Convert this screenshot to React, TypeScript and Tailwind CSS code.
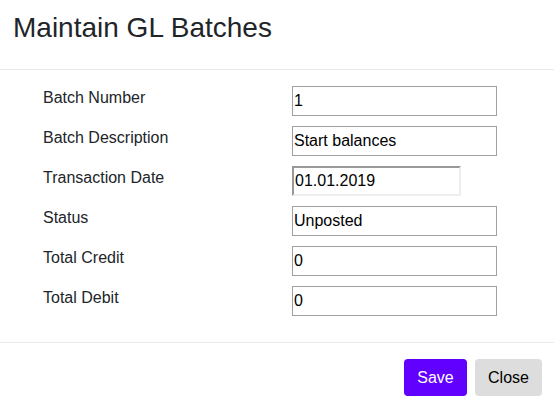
import React from "react";

const fields = [
  { label: "Batch Number", value: "1" },
  { label: "Batch Description", value: "Start balances" },
  { label: "Transaction Date", value: "01.01.2019", date: true },
  { label: "Status", value: "Unposted" },
  { label: "Total Credit", value: "0" },
  { label: "Total Debit", value: "0" },
];

const App = () => {
  return (
    <div className="w-[554px] h-[411px] bg-white text-[#212529] font-['Liberation_Sans',Arial,sans-serif] flex flex-col">
      {/* Header */}
      <div className="pl-[13px] pt-[11px] pb-[24px] border-b border-[#e9ecef]">
        <h1 className="text-[28px] leading-[34px] font-normal">Maintain GL Batches</h1>
      </div>

      {/* Body */}
      <div className="pt-[16px] pb-[26px] pl-[43px] flex flex-col gap-[10px] border-b border-[#e9ecef]">
        {fields.map((f) => (
          <div key={f.label} className="flex items-start h-[30px]">
            <div className="w-[249px] text-[16px] leading-6">{f.label}</div>
            {f.date ? (
              <input
                readOnly
                value={f.value}
                className="w-[169px] h-[30px] border-2 border-t-[#999999] border-l-[#999999] border-b-[#eeeeee] border-r-[#eeeeee] px-[1px] text-[16px] text-black outline-none"
              />
            ) : (
              <input
                readOnly
                value={f.value}
                className="w-[205px] h-[30px] border border-[#a0a0a0] px-[1px] text-[16px] text-black outline-none"
              />
            )}
          </div>
        ))}
      </div>

      {/* Footer */}
      <div className="flex justify-end gap-2 pt-[16px] pr-[12px]">
        <button className="w-[63px] h-[37px] rounded bg-[#6200ff] text-white text-[16px]">Save</button>
        <button className="w-[67px] h-[37px] rounded bg-[#dddddd] text-black text-[16px]">Close</button>
      </div>
    </div>
  );
};

export default App;
